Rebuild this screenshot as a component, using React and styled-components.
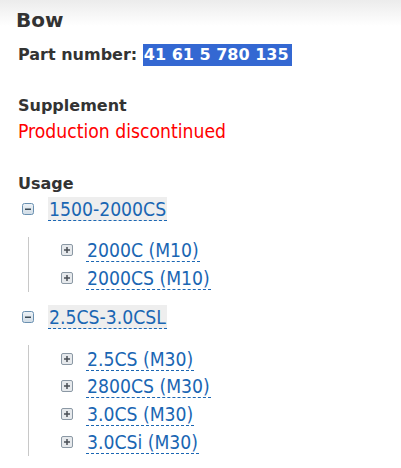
import React from 'react';
import styled, { createGlobalStyle } from 'styled-components';

const GlobalStyle = createGlobalStyle`
  html, body {
    margin: 0;
    padding: 0;
    background: #fff;
  }
  body {
    font-family: "DejaVu Sans", Verdana, sans-serif;
    color: #333;
  }
`;

const Page = styled.div`
  min-height: 468px;
  background: linear-gradient(180deg, #ececec 0px, #ffffff 26px, #ffffff 100%);
  padding-top: 8px;
  box-sizing: border-box;
`;

const Title = styled.h1`
  margin: 0;
  padding: 0 16px;
  font-size: 20px;
  line-height: 24px;
  font-weight: 700;
  color: #333;
`;

const Body = styled.div`
  padding: 0 18px;
  display: flex;
  flex-direction: column;
`;

const PartRow = styled.div`
  margin-top: 11.5px;
  font-size: 16px;
  line-height: 22px;
  font-weight: 700;
  color: #333;
  white-space: nowrap;
`;

const Selected = styled.span`
  background: #3468d2;
  color: #fff;
  padding: 0 3px 0 1px;
  display: inline-block;
  line-height: 22px;
`;

const Label = styled.div`
  margin-top: ${({ $gap }) => $gap}px;
  font-size: 16px;
  line-height: 20px;
  font-weight: 700;
  color: #333;
`;

const Notice = styled.div`
  margin-top: 5px;
  font-family: "DejaVu Sans Condensed", "DejaVu Sans", sans-serif;
  font-stretch: condensed;
  font-size: 19.2px;
  line-height: 22px;
  color: #ff0000;
`;

const Tree = styled.ul`
  list-style: none;
  margin: 2.5px 0 0;
  padding: 0;
`;

const Group = styled.li`
  margin: 0 0 13px;
`;

const Row = styled.div`
  display: flex;
  align-items: center;
  height: ${({ $h }) => $h}px;
`;

const Toggle = styled.svg`
  flex: none;
  width: 12px;
  height: 12px;
  margin-left: ${({ $x }) => $x}px;
  margin-right: ${({ $gap }) => $gap}px;
`;

const Link = styled.a`
  display: inline-block;
  font-family: "DejaVu Sans Condensed", "DejaVu Sans", sans-serif;
  font-stretch: condensed;
  font-size: 19.2px;
  line-height: 21px;
  padding: 2px 1px 0;
  color: #1a66b3;
  text-decoration: none;
  border-bottom: 1px dashed #1a66b3;
  background: ${({ $shade }) => ($shade ? '#eeeeee' : 'transparent')};
  white-space: nowrap;
`;

const Children = styled.ul`
  list-style: none;
  margin: 16px 0 0 10px;
  padding: 0;
  border-left: 1px solid #c8c8c8;
`;

function MinusIcon() {
  return (
    <Toggle $x={4} $gap={14} viewBox="0 0 12 12">
      <defs>
        <linearGradient id="mg" x1="0" y1="0" x2="0" y2="1">
          <stop offset="0" stopColor="#eef3f7" />
          <stop offset="1" stopColor="#cfdbe5" />
        </linearGradient>
      </defs>
      <rect x="0.5" y="0.5" width="11" height="11" rx="2" fill="url(#mg)" stroke="#6a90b0" />
      <rect x="3" y="5.5" width="6" height="1.5" fill="#3b4a56" />
    </Toggle>
  );
}

function PlusIcon() {
  return (
    <Toggle $x={32} $gap={13} viewBox="0 0 12 12">
      <rect x="0.5" y="0.5" width="11" height="11" rx="1.5" fill="#e6e9ec" stroke="#8b98a4" />
      <rect x="3" y="5.25" width="6" height="1.5" fill="#4a4f55" />
      <rect x="5.25" y="3" width="1.5" height="6" fill="#4a4f55" />
    </Toggle>
  );
}

const usage = [
  { name: '1500-2000CS', models: ['2000C (M10)', '2000CS (M10)'] },
  { name: '2.5CS-3.0CSL', models: ['2.5CS (M30)', '2800CS (M30)', '3.0CS (M30)', '3.0CSi (M30)'] },
];

export default function App() {
  return (
    <>
      <GlobalStyle />
      <Page>
        <Title>Bow</Title>
        <Body>
          <PartRow>
            Part number: <Selected>41 61 5 780 135</Selected>
          </PartRow>
          <Label $gap={30.5}>Supplement</Label>
          <Notice>Production discontinued</Notice>
          <Label $gap={31}>Usage</Label>
          <Tree>
            {usage.map((group) => (
              <Group key={group.name}>
                <Row $h={24}>
                  <MinusIcon />
                  <Link href="#" $shade>{group.name}</Link>
                </Row>
                <Children>
                  {group.models.map((model) => (
                    <Row key={model} $h={27.7}>
                      <PlusIcon />
                      <Link href="#">{model}</Link>
                    </Row>
                  ))}
                </Children>
              </Group>
            ))}
          </Tree>
        </Body>
      </Page>
    </>
  );
}
